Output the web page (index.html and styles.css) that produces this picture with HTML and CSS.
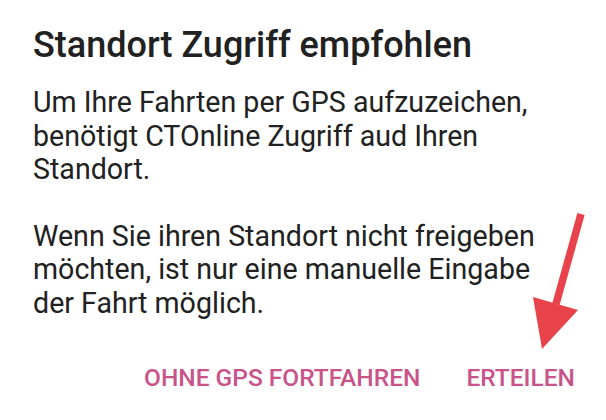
FILE: index.html
```html
<!DOCTYPE html>
<html lang="de">
<head>
    <meta charset="UTF-8">
    <meta name="viewport" content="width=device-width, initial-scale=1.0">
    <title>Standort Zugriff</title>
    <link rel="stylesheet" href="styles.css">
</head>
<body>

    <div class="dialog">
        <h1 class="dialog-title">Standort Zugriff empfohlen</h1>

        <p class="dialog-text">Um Ihre Fahrten per GPS aufzuzeichen, benötigt CTOnline Zugriff aud Ihren Standort.</p>
        <p class="dialog-text">Wenn Sie ihren Standort nicht freigeben möchten, ist nur eine manuelle Eingabe der Fahrt möglich.</p>

        <div class="dialog-actions">
            <button class="action">Ohne GPS fortfahren</button>
            <button class="action">Erteilen</button>
        </div>
    </div>

    <!-- annotation arrow pointing at the grant button -->
    <svg class="hint-arrow" width="606" height="420" viewBox="0 0 606 420">
        <line x1="581" y1="214" x2="556" y2="304" stroke="#e8424a" stroke-width="7.5"/>
        <polygon points="533,297 578,310 542,349" fill="#e8424a"/>
    </svg>

</body>
</html>
```

FILE: styles.css
```css
body {
    margin: 0;
    background-color: #fff;
    font-family: Roboto, "Noto Sans", sans-serif;
    color: #212121;
}
.dialog {
    position: relative;
    width: 606px;
    height: 420px;
    box-sizing: border-box;
    padding: 24px 31px 0 33px;
}
.dialog-title {
    margin: 0 0 19px 0;
    font-size: 36px;
    line-height: 43px;
    font-weight: 500;
}
.dialog-text {
    margin: 0;
    font-size: 28.6px;
    line-height: 33.5px;
    font-weight: 400;
}
.dialog-text + .dialog-text {
    margin-top: 33px;
}
.dialog-actions {
    display: flex;
    justify-content: flex-end;
    gap: 46px;
    margin-top: 43px;
}
.action {
    padding: 0;
    border: none;
    background: none;
    font-family: Roboto, sans-serif;
    font-size: 24.5px;
    line-height: 29px;
    font-weight: 500;
    text-transform: uppercase;
    color: #c8548a;
    cursor: pointer;
}
.hint-arrow {
    position: absolute;
    top: 0;
    left: 0;
    pointer-events: none;
}
```
